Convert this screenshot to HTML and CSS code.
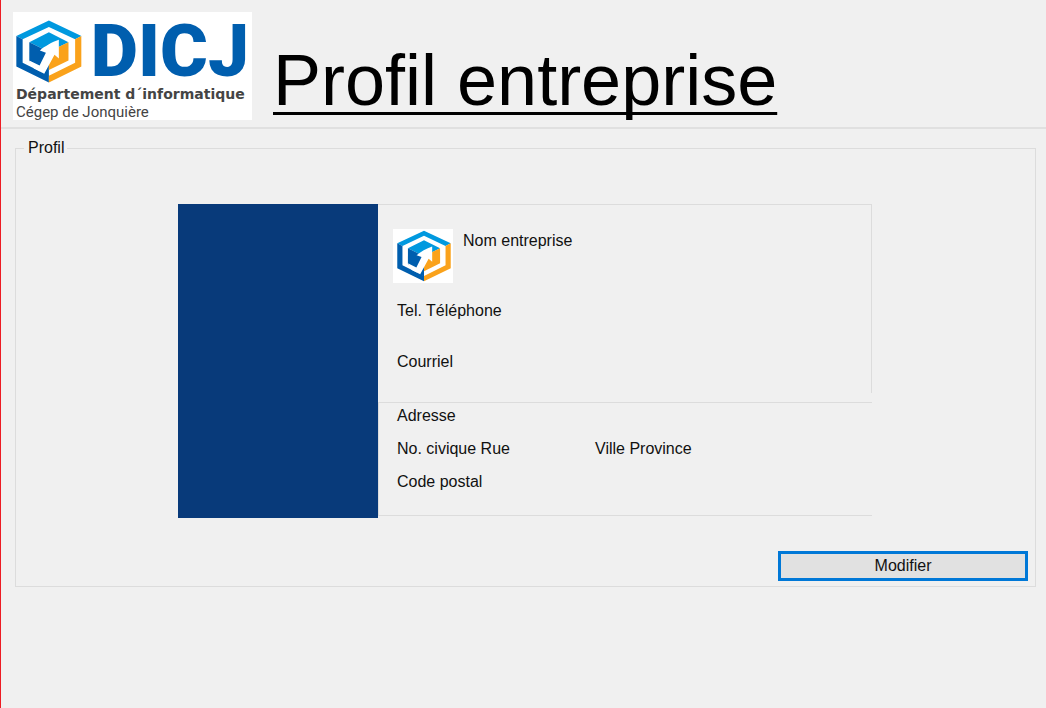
FILE: index.html
```html
<!DOCTYPE html>
<html lang="fr">
<head>
<meta charset="utf-8">
<title>Profil entreprise</title>
<link rel="stylesheet" href="styles.css">
</head>
<body>
<svg class="symbols" aria-hidden="true">
  <symbol id="cube" viewBox="36 31 198 188">
    <path fill="#0099df" d="M37 78 135 32l98 46-19 10-79-37-79 37z"/>
    <path fill="#005eae" d="M37 78l19 10v71l79 39v20L37 170z"/>
    <path fill="#faa21b" d="M233 78v92l-98 48v-20l79-39V88z"/>
    <path fill="#0099df" d="M76 97l59-30 59 30-59 29z"/>
    <path fill="#005eae" d="M76 97l59 29v74l-20-9-39-38z"/>
    <path fill="#faa21b" d="M194 97v55l-59 29v-56z"/>
    <path fill="#fff" d="M165 90v56l-13-11-31 57-31-16-14-24 31 15 19-38-18-7c14-12 36-25 57-32z"/>
  </symbol>
</svg>
<header class="header">
  <div class="logo">
    <div class="brand">
      <svg class="brand-cube" aria-hidden="true"><use href="#cube"/></svg>
      <span class="brand-name">DICJ</span>
    </div>
    <div class="department">Département d´informatique</div>
    <div class="college">Cégep de Jonquière</div>
  </div>
  <h1 class="title">Profil entreprise</h1>
</header>
<main>
  <fieldset class="profile">
    <legend class="legend">Profil</legend>
    <div class="card">
      <div class="banner"></div>
      <div class="details">
        <section class="contact">
          <div class="company">
            <svg class="company-logo" viewBox="0 0 60 54" aria-hidden="true"><use href="#cube" x="4" y="1" width="54" height="52"/></svg>
            <span>Nom entreprise</span>
          </div>
          <p class="line phone">Tel. Téléphone</p>
          <p class="line mail">Courriel</p>
        </section>
        <section class="address">
          <p class="line">Adresse</p>
          <div class="street">
            <p class="line">No. civique Rue</p>
            <p class="line">Ville Province</p>
          </div>
          <p class="line">Code postal</p>
        </section>
      </div>
    </div>
    <button class="edit" type="button">Modifier</button>
  </fieldset>
</main>
</body>
</html>
```

FILE: styles.css
```css
* {
  box-sizing: border-box;
}

body {
  margin: 0;
  min-height: 100vh;
  border-left: 1px solid #ed1c24;
  background: #f0f0f0;
  color: #111;
  font: 16px/18px "Liberation Sans", Arial, sans-serif;
  font-variant-ligatures: none;
}

.symbols {
  position: absolute;
  width: 0;
  height: 0;
}

.header {
  display: flex;
  align-items: flex-start;
  gap: 21px;
  padding: 12px 12px 7px;
  border-bottom: 2px solid #e0e0e0;
}

.logo {
  flex: none;
  width: 239px;
  padding: 6px 3px 0;
  background: #fff;
  color: #444;
  white-space: nowrap;
}

.brand {
  display: flex;
  align-items: center;
  gap: 9px;
  height: 66px;
}

.brand-cube {
  width: 66px;
  height: 63px;
}

.brand-name {
  color: #005eae;
  font: 900 73px/64px Roboto, sans-serif;
}

.department {
  font: bold 14px/20px "DejaVu Sans", sans-serif;
}

.college {
  font: 400 15px/16px Roboto, sans-serif;
}

.title {
  margin: 28px 0 0;
  color: #000;
  font-size: 72px;
  font-weight: normal;
  line-height: 80px;
  text-decoration: underline 3px;
  text-decoration-skip-ink: none;
  text-underline-offset: 7px;
}

.profile {
  margin: 10px 10px 0 14px;
  padding: 47px 7px 5px 8px;
  border: 1px solid #dcdcdc;
}

.legend {
  padding: 0 3px 0 4px;
}

.card {
  display: flex;
  margin: 0 156px 0 154px;
}

.banner {
  flex: none;
  width: 200px;
  background: #083a7a;
}

.details {
  flex: 1;
  padding-bottom: 2px;
}

.contact {
  min-height: 189px;
  padding: 24px 15px 0;
  border: solid #dcdcdc;
  border-width: 1px 1px 0 0;
}

.company {
  display: flex;
  gap: 10px;
  line-height: 24px;
}

.company-logo {
  width: 60px;
  height: 54px;
  background: #fff;
}

.line {
  margin: 0;
  padding-left: 4px;
}

.phone {
  margin-top: 19px;
}

.mail {
  margin-top: 33px;
}

.address {
  display: grid;
  gap: 15px;
  margin-top: 9px;
  padding: 4px 0 24px 14px;
  border: solid #dcdcdc;
  border-width: 1px 0 1px 1px;
}

.street {
  display: grid;
  grid-template-columns: 198px 1fr;
}

.edit {
  display: block;
  width: 250px;
  height: 30px;
  margin: 33px 0 0 auto;
  padding: 0;
  border: 3px solid #0078d7;
  background: #e1e1e1;
  color: inherit;
  font: inherit;
}
```
